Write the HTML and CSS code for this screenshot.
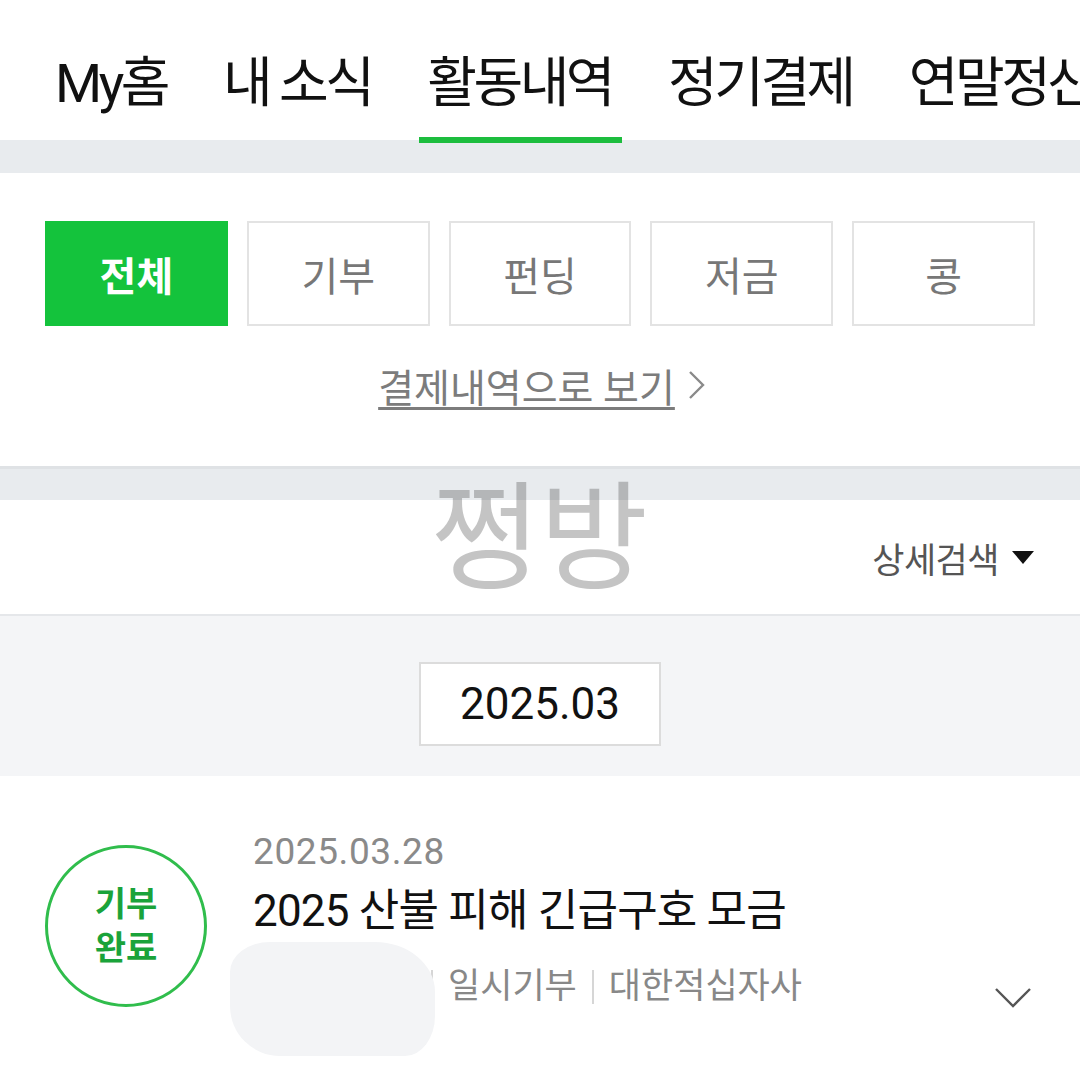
FILE: index.html
```html
<!DOCTYPE html>
<html lang="ko">
<head>
  <meta charset="UTF-8">
  <meta name="viewport" content="width=device-width, initial-scale=1.0">
  <title>활동내역</title>
  <link rel="stylesheet" href="styles.css">
</head>
<body>
  <div class="page">
    <!-- Top tabs -->
    <nav class="tabs">
      <a href="#" class="tab">My홈</a>
      <a href="#" class="tab">내 소식</a>
      <a href="#" class="tab active">활동내역</a>
      <a href="#" class="tab">정기결제</a>
      <a href="#" class="tab">연말정산</a>
    </nav>
    <div class="divider"></div>

    <!-- Filters -->
    <section class="filters">
      <div class="filter-grid">
        <button class="filter active">전체</button>
        <button class="filter">기부</button>
        <button class="filter">펀딩</button>
        <button class="filter">저금</button>
        <button class="filter">콩</button>
      </div>
      <a href="#" class="pay-link"><span class="pay-text">결제내역으로 보기</span>
        <svg class="pay-arrow" width="20" height="32" viewBox="0 0 20 32"><polyline points="4,3 17,16 4,29" fill="none" stroke="#8a8a8a" stroke-width="2.4"/></svg>
      </a>
    </section>
    <div class="divider divider-line"></div>

    <!-- Search -->
    <div class="search-row">
      <button class="search-btn">상세검색 <span class="caret"></span></button>
    </div>

    <!-- Month -->
    <div class="month-row">
      <div class="month-box">2025.03</div>
    </div>

    <!-- Activity item -->
    <div class="item">
      <div class="badge">기부<br>완료</div>
      <div class="item-body">
        <div class="item-date">2025.03.28</div>
        <div class="item-title">2025 산불 피해 긴급구호 모금</div>
        <div class="item-meta">
          <span class="amount"></span>
          <span class="sep"></span>
          <span>일시기부</span>
          <span class="sep"></span>
          <span>대한적십자사</span>
        </div>
      </div>
      <svg class="item-toggle" width="40" height="24" viewBox="0 0 40 24"><polyline points="3,3 20,20 37,3" fill="none" stroke="#555" stroke-width="2.4"/></svg>
      <div class="blur-blob"></div>
    </div>

    <div class="watermark">쩡방</div>
  </div>
</body>
</html>
```

FILE: styles.css
```css
/* Reset */
* {
  margin: 0;
  padding: 0;
  box-sizing: border-box;
  font-family: Roboto, "Noto Sans CJK KR", sans-serif;
}

body {
  background: white;
  color: #111;
  overflow: hidden;
}

.page {
  position: relative;
  width: 1080px;
  min-height: 1066px;
  overflow: hidden;
}

/* Tabs */
.tabs {
  display: flex;
  height: 140px;
  padding-left: 45px;
  gap: 36px;
  white-space: nowrap;
  position: relative;
  z-index: 1;
}

.tab {
  position: relative;
  display: flex;
  align-items: center;
  padding: 16px 10px 0;
  font-size: 54px;
  letter-spacing: -3.5px;
  color: #111;
  text-decoration: none;
}

.tab.active::after {
  content: "";
  position: absolute;
  left: 2px;
  right: 0;
  bottom: -3px;
  height: 6px;
  background: #1dbd3e;
}

.divider {
  height: 33px;
  background: #e8ebee;
}

.divider-line {
  height: 34px;
  border-top: 3px solid #dfe2e5;
}

/* Filters */
.filters {
  padding: 48px 45px 0;
  height: 293px;
  display: flex;
  flex-direction: column;
  align-items: center;
}

.filter-grid {
  width: 100%;
  display: grid;
  grid-template-columns: repeat(5, 1fr);
  gap: 19px;
}

.filter {
  height: 105px;
  background: white;
  border: 2px solid #e3e3e3;
  color: #777;
  font-size: 40px;
  font-family: "Noto Sans CJK KR", sans-serif;
  cursor: pointer;
}

.filter.active {
  background: #14c33c;
  border-color: #14c33c;
  color: white;
  font-weight: bold;
}

.pay-link {
  margin-top: 31px;
  margin-left: 4px;
  display: flex;
  align-items: center;
  gap: 11px;
  color: #7c7c7c;
  text-decoration: none;
}

.pay-text {
  font-size: 39px;
  text-decoration: underline;
  text-decoration-thickness: 3px;
  text-underline-offset: 5px;
}

/* Search row */
.search-row {
  height: 116px;
  display: flex;
  align-items: center;
  justify-content: flex-end;
  padding-right: 46px;
  border-bottom: 2px solid #e5e7ea;
}

.search-btn {
  display: flex;
  align-items: center;
  gap: 13px;
  background: none;
  border: none;
  font-size: 35px;
  color: #555;
  letter-spacing: -0.5px;
}

.caret {
  width: 0;
  height: 0;
  border-left: 11px solid transparent;
  border-right: 11px solid transparent;
  border-top: 13px solid #111;
}

/* Month */
.month-row {
  height: 160px;
  background: #f4f5f7;
  display: flex;
  align-items: flex-start;
  justify-content: center;
  padding-top: 46px;
}

.month-box {
  width: 242px;
  height: 84px;
  background: white;
  border: 2px solid #dcdcdc;
  display: flex;
  align-items: center;
  justify-content: center;
  font-size: 44px;
  color: #111;
}

/* Item */
.item {
  position: relative;
  display: flex;
  align-items: flex-start;
  padding: 69px 45px 0;
}

.badge {
  flex: none;
  width: 162px;
  height: 162px;
  border: 3px solid #30bd4c;
  border-radius: 50%;
  display: flex;
  align-items: center;
  justify-content: center;
  text-align: center;
  color: #1aa33a;
  font-size: 34px;
  font-weight: bold;
  line-height: 44px;
}

.item-body {
  margin-left: 46px;
  margin-top: -17px;
  flex: 1;
}

.item-date {
  font-size: 37px;
  letter-spacing: 0.6px;
  color: #8a8a8a;
  line-height: 48px;
}

.item-title {
  margin-top: 6px;
  font-size: 44px;
  letter-spacing: -0.8px;
  color: #111;
  line-height: 58px;
}

.item-meta {
  margin-top: 24px;
  display: flex;
  align-items: center;
  font-size: 35px;
  color: #888;
  line-height: 46px;
}

.amount {
  width: 163px;
}

.sep {
  width: 2px;
  height: 34px;
  background: #d6d6d6;
  margin: 0 15px;
}

.item-toggle {
  position: absolute;
  left: 993px;
  top: 210px;
}

.blur-blob {
  position: absolute;
  left: 230px;
  top: 166px;
  width: 205px;
  height: 114px;
  background: #f3f4f6;
  border-radius: 40px 60px 30px 50px / 30px 50px 40px 50px;
}

/* Watermark */
.watermark {
  position: absolute;
  left: 431px;
  top: 449px;
  font-family: "Noto Sans CJK KR", sans-serif;
  font-size: 118px;
  line-height: 160px;
  color: rgba(61, 61, 61, 0.3);
  z-index: 2;
}
```
